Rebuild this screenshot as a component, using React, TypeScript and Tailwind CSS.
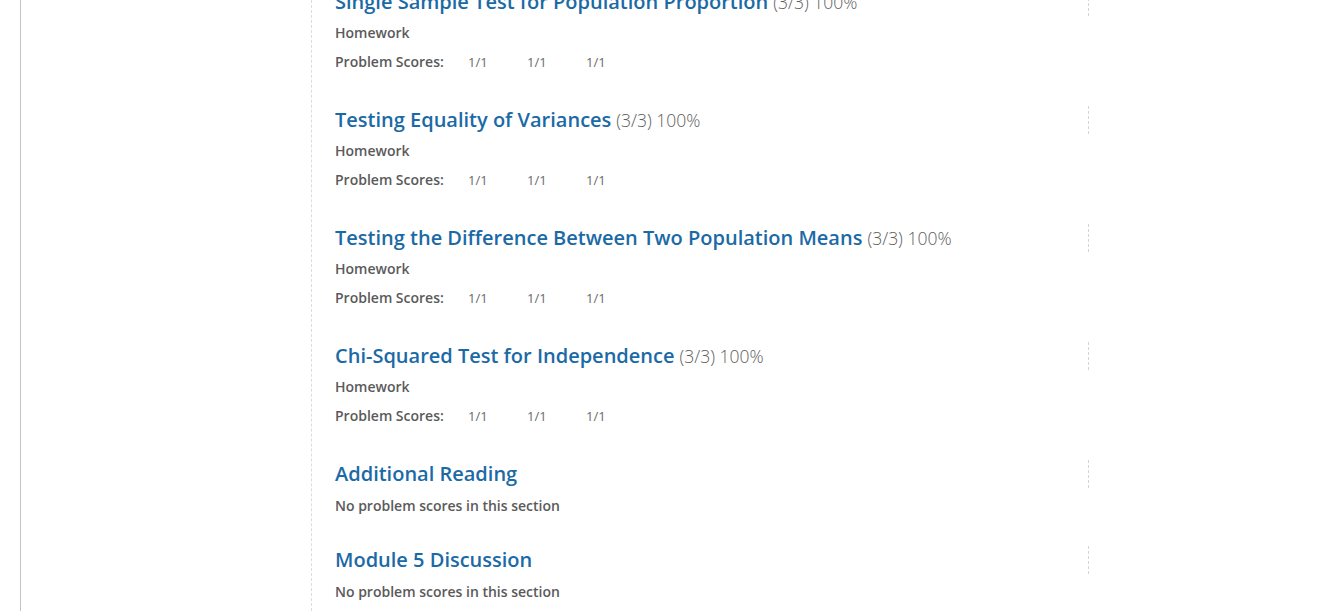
import React from "react";

type Section = {
  title: string;
  score?: string;
  kind?: string;
  scores?: string[];
};

const sections: Section[] = [
  { title: "Single Sample Test for Population Proportion", score: "(3/3) 100%", kind: "Homework", scores: ["1/1", "1/1", "1/1"] },
  { title: "Testing Equality of Variances", score: "(3/3) 100%", kind: "Homework", scores: ["1/1", "1/1", "1/1"] },
  { title: "Testing the Difference Between Two Population Means", score: "(3/3) 100%", kind: "Homework", scores: ["1/1", "1/1", "1/1"] },
  { title: "Chi-Squared Test for Independence", score: "(3/3) 100%", kind: "Homework", scores: ["1/1", "1/1", "1/1"] },
  { title: "Additional Reading" },
  { title: "Module 5 Discussion" },
];

function SectionBlock({ s }: { s: Section }) {
  return (
    <div className="flex flex-col">
      <div className="h-[28px] w-[754px] border-r border-dashed border-[#d4d4d4] flex items-center whitespace-nowrap">
        <a className="text-[20px] font-semibold text-[#1b6aa5] leading-[28px]">{s.title}</a>
        {s.score && (
          <span className="ml-[5px] text-[17.5px] font-light text-[#5e5e5e] leading-[28px]">{s.score}</span>
        )}
      </div>
      {s.scores ? (
        <>
          <div className="mt-[7px] h-[20px] text-[14px] font-semibold text-[#5a5a5a] leading-[20px]">{s.kind}</div>
          <div className="mt-[9px] h-[20px] flex items-center text-[#5a5a5a]">
            <span className="text-[14px] font-semibold leading-[20px] w-[133px]">Problem Scores:</span>
            {s.scores.map((sc, i) => (
              <span key={i} className="text-[13px] leading-[20px] text-[#6a6a6a] w-[59px]">{sc}</span>
            ))}
          </div>
        </>
      ) : (
        <div className="mt-[8px] h-[20px] text-[14px] font-semibold text-[#5a5a5a] leading-[20px]">
          No problem scores in this section
        </div>
      )}
    </div>
  );
}

export default function App() {
  return (
    <div
      className="w-[1320px] h-[611px] overflow-hidden bg-white flex"
      style={{ fontFamily: '"Open Sans", "Liberation Sans", sans-serif' }}
    >
      <div className="ml-[20px] w-[291px] shrink-0 border-l border-[#c4c4c4]" />
      <div className="flex-1 border-l border-dashed border-[#dcdcdc] pl-[23px]">
        <div className="-mt-[12px] flex flex-col">
          {sections.map((s, i) => (
            <div key={i} className={i === 0 ? "" : i === 5 ? "mt-[30px]" : "mt-[34px]"}>
              <SectionBlock s={s} />
            </div>
          ))}
        </div>
      </div>
    </div>
  );
}
